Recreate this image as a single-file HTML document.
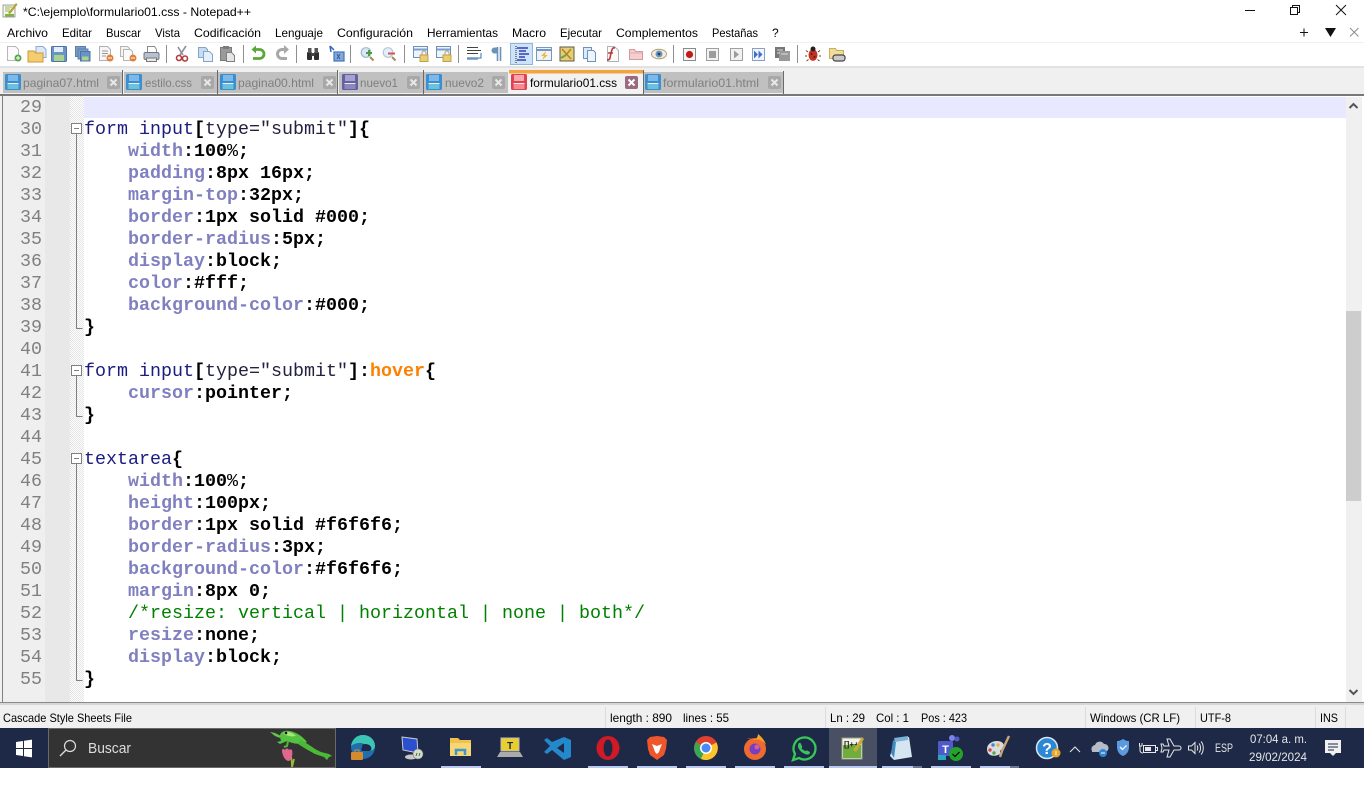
<!DOCTYPE html>
<html><head><meta charset="utf-8"><title>*C:\ejemplo\formulario01.css - Notepad++</title>
<style>
html,body{margin:0;padding:0;background:#fff;overflow:hidden;width:1364px;height:785px}
svg{display:block;position:absolute;left:0;top:0}
.u{font:12px "Liberation Sans",sans-serif;fill:#000}
.t{font:12px "Liberation Sans",sans-serif;fill:#7f7f7f}
.m{font:18.33px "Liberation Mono",monospace;white-space:pre}
.n{fill:#808080}
.s{fill:#1b1b80}
.a{fill:#222240}
.b{fill:#000;font-weight:bold}
.r{fill:#000;font-weight:normal}
.p{fill:#8080c0;font-weight:bold}
.o{fill:#ff8000;font-weight:bold}
.c{fill:#008000}
.w{font:12px "Liberation Sans",sans-serif;fill:#e6e6e6}
</style></head><body>
<svg width="1364" height="785" viewBox="0 0 1364 785" xmlns="http://www.w3.org/2000/svg">
<defs>
<pattern id="h" width="2" height="2" patternUnits="userSpaceOnUse"><rect width="2" height="2" fill="#fff"/><rect width="1" height="1" fill="#e4e4e4"/><rect x="1" y="1" width="1" height="1" fill="#e4e4e4"/></pattern>
<g id="fl"><rect x="0" y="0" width="16" height="16" rx="1.500" fill="#3b8ed0"/><rect x="3" y="1" width="10" height="6" fill="#7db8e8"/><rect x="2.500" y="9" width="11" height="6" fill="#6cc0d8"/><rect x="2.500" y="9" width="11" height="1" fill="#e5f2f8"/></g>
<g id="xb"><rect width="13" height="13" rx="2" fill="#a8a8a8"/><path d="M3.500 3.500l6 6M9.500 3.500l-6 6" stroke="#e8e8e8" stroke-width="2"/></g>
</defs>

<!-- chrome backgrounds -->
<rect width="1364" height="785" fill="#fff"/>
<rect y="42" width="1364" height="1" fill="#f0f0f0"/>
<rect y="66" width="1364" height="2" fill="#e2e2e2"/>
<rect y="68" width="1364" height="27" fill="#f0f0f0"/>

<!-- title bar -->
<g>
<rect x="3" y="5" width="12" height="12" fill="#f4f4e8" stroke="#8a8a8a" stroke-width=".8"/>
<path d="M5 7h7M5 9h5M5 11h6" stroke="#8fbf5f" stroke-width="1"/>
<path d="M8 13L16 3l1.500 1.500L10 14z" fill="#b6a12f"/>
<rect x="5" y="14" width="9" height="2.500" fill="#7fb347"/>
</g>
<text class="u" x="23" y="16" textLength="228" lengthAdjust="spacingAndGlyphs">*C:\ejemplo\formulario01.css - Notepad++</text>
<path d="M1245 10.500h10" stroke="#111" stroke-width="1"/>
<path d="M1290.500 7.500h7v7h-7zM1292.500 7.500v-2h7v7h-2" fill="none" stroke="#111" stroke-width="1"/>
<path d="M1336 5l10 10M1346 5l-10 10" stroke="#111" stroke-width="1"/>

<!-- menu -->
<g class="u">
<text class="u" x="7" y="37" textLength="41" lengthAdjust="spacingAndGlyphs">Archivo</text>
<text class="u" x="62" y="37" textLength="30" lengthAdjust="spacingAndGlyphs">Editar</text>
<text class="u" x="106" y="37" textLength="35" lengthAdjust="spacingAndGlyphs">Buscar</text>
<text class="u" x="155" y="37" textLength="25" lengthAdjust="spacingAndGlyphs">Vista</text>
<text class="u" x="194" y="37" textLength="67" lengthAdjust="spacingAndGlyphs">Codificación</text>
<text class="u" x="275" y="37" textLength="48" lengthAdjust="spacingAndGlyphs">Lenguaje</text>
<text class="u" x="337" y="37" textLength="76" lengthAdjust="spacingAndGlyphs">Configuración</text>
<text class="u" x="427" y="37" textLength="71" lengthAdjust="spacingAndGlyphs">Herramientas</text>
<text class="u" x="512" y="37" textLength="34" lengthAdjust="spacingAndGlyphs">Macro</text>
<text class="u" x="560" y="37" textLength="42" lengthAdjust="spacingAndGlyphs">Ejecutar</text>
<text class="u" x="616" y="37" textLength="82" lengthAdjust="spacingAndGlyphs">Complementos</text>
<text class="u" x="712" y="37" textLength="46" lengthAdjust="spacingAndGlyphs">Pestañas</text>
<text class="u" x="772" y="37">?</text>
</g>
<path d="M1300 32.500h8M1304 28.500v8" stroke="#111" stroke-width="1"/>
<path d="M1325 28h11l-5.500 9z" fill="#111"/>
<path d="M1350 28l8.500 8.500M1358.500 28l-8.500 8.500" stroke="#8c8c8c" stroke-width="1"/>

<!-- toolbar -->
<g fill="none">
<path d="M7.500 46.500h8l3 3v11h-11z" fill="#fbfbfb" stroke="#b8b8b8"/><circle cx="18" cy="58" r="3.500" fill="#55a54a"/><path d="M16 58h4M18 56v4" stroke="#fff"/>
<path d="M36 46.500h7l3 3v8h-10z" fill="#dde8f6" stroke="#8fa9cf"/><path d="M28 51h6l2 2h7v9H28z" fill="#f5cd6e" stroke="#c99a38"/>
<rect x="51.500" y="46.500" width="15" height="15" rx="1" fill="#6a93c6" stroke="#4a74aa"/><rect x="54" y="47" width="9" height="5" fill="#e4eef8"/><rect x="54" y="55" width="10" height="6" fill="#a9d28a"/>
<rect x="75.500" y="46.500" width="10" height="10" fill="#7a9cc6" stroke="#5c80ab"/><rect x="78" y="49" width="10" height="10" fill="#7a9cc6" stroke="#5c80ab"/><rect x="80.500" y="51.500" width="9.500" height="9.500" fill="#6a93c6" stroke="#4a74aa"/><rect x="82" y="56.500" width="6.500" height="4" fill="#a9d28a"/>
<path d="M99.500 46.500h8l3 3v11h-11z" fill="#f6f6f6" stroke="#b0b0b0"/><path d="M102 51h6M102 53.500h6M102 56h4" stroke="#999"/><circle cx="110" cy="58" r="3.500" fill="#e0803a"/><path d="M108 58h4" stroke="#fff"/>
<path d="M120.500 46.500h7l2 2v8h-9z" fill="#f3f3f3" stroke="#b5b5b5"/><path d="M123.500 49.500h7l2 2v9h-9z" fill="#fafafa" stroke="#b5b5b5"/><circle cx="133" cy="58" r="3.500" fill="#e0803a"/><path d="M131 58h4" stroke="#fff"/>
<path d="M147.500 46.500h7l2 3v4h-9z" fill="#fff" stroke="#8b8b8b"/><rect x="144" y="52.500" width="15" height="7" rx="1.500" fill="#b7c1cf" stroke="#6f7782"/><rect x="146.500" y="58" width="10" height="3.500" fill="#e9e9e9" stroke="#777"/>
<path d="M166.500 45v18" stroke="#8f8f8f"/>
<path d="M186 46l-6 9M178 47l5 8" stroke="#8e8e9c" stroke-width="1.600"/><circle cx="179" cy="58" r="2.500" stroke="#b33c3c" stroke-width="1.600"/><circle cx="185" cy="58.500" r="2.500" stroke="#b33c3c" stroke-width="1.600"/>
<path d="M198.500 47.500h7l2 2v8h-9z" fill="#c6dcf2" stroke="#84a4c8"/><path d="M203.500 51.500h6l3 3v7h-9z" fill="#e4eff9" stroke="#84a4c8"/>
<rect x="220.500" y="47.500" width="11" height="13" fill="#9a9a9a" stroke="#7a7a7a"/><path d="M226.500 52.500h5l3 3v6h-8z" fill="#e5e5e5" stroke="#7f7f7f"/><rect x="223" y="46" width="6" height="3" fill="#7c7c7c"/>
<path d="M243.500 45v18" stroke="#8f8f8f"/>
<path d="M254 49.500h5.500a4.500 4.500 0 0 1 0 9H253" stroke="#59a836" stroke-width="2.800"/><path d="M256 45.500v8l-4.500-4z" fill="#59a836"/>
<path d="M287 49.500h-5a4.500 4.500 0 0 0 0 9h5" stroke="#a8a8a8" stroke-width="3"/><path d="M284 45v9l5-4.500z" fill="#a8a8a8"/>
<path d="M296.500 45v18" stroke="#8f8f8f"/>
<rect x="307" y="52" width="5" height="8" rx="1" fill="#2f2f2f"/><rect x="314" y="52" width="5" height="8" rx="1" fill="#2f2f2f"/><rect x="308" y="48" width="3.500" height="5" fill="#555"/><rect x="314.500" y="48" width="3.500" height="5" fill="#555"/><rect x="311" y="53" width="4" height="3" fill="#444"/>
<path d="M330 46l1 6M330 46l4 4" stroke="#3566b0" stroke-width="1.500"/><rect x="334" y="52" width="10" height="9" fill="#86a9d6" stroke="#3f74ba" stroke-width="1.200"/><path d="M337 54l3 5M340 54l-3 5" stroke="#2f5ca0"/>
<path d="M350.500 45v18" stroke="#8f8f8f"/>
<circle cx="366" cy="52.500" r="4.800" fill="#d8e8f6" stroke="#9cb8d3" stroke-width="1.200"/><path d="M370 57l3.500 3.500" stroke="#a68a5a" stroke-width="2"/><path d="M366 53h6M369 50v6" stroke="#4aa03f" stroke-width="2"/>
<circle cx="388" cy="52.500" r="4.800" fill="#e3eef8" stroke="#b5c8da" stroke-width="1.200"/><path d="M392 57l3.500 3.500" stroke="#a68a5a" stroke-width="2"/><path d="M388 53.500h7" stroke="#d6554d" stroke-width="2"/>
<path d="M404.500 45v18" stroke="#8f8f8f"/>
<path d="M413.500 46.500h14v11h-14z" fill="#eef4fb" stroke="#6f90b9"/><path d="M414 49.500h13" stroke="#7aa0cf" stroke-width="2"/><rect x="420" y="55" width="8" height="6.500" fill="#e8cf77" stroke="#c4a23f"/><path d="M422 55v-2a2 2 0 0 1 4 0v2" stroke="#b7a26a"/>
<path d="M436.500 46.500h14v11h-14z" fill="#eef4fb" stroke="#6f90b9"/><path d="M437 49.500h13" stroke="#7aa0cf" stroke-width="2"/><rect x="443" y="55" width="8" height="6.500" fill="#e8cf77" stroke="#c4a23f"/><path d="M445 55v-2a2 2 0 0 1 4 0v2" stroke="#b7a26a"/>
<path d="M458.500 45v18" stroke="#8f8f8f"/>
<path d="M467 47.500h11M467 50.500h14M467 53.500h11" stroke="#444"/><path d="M467 58.500h11" stroke="#6f94c0" stroke-width="2.500"/><path d="M481 53v5h-3" stroke="#3670b5"/>
<path d="M497.500 47v14M500.500 47v14" stroke="#6b93b9" stroke-width="1.600"/><path d="M497 47.500h-2.500a3 3 0 0 0 0 6H497z" fill="#6b93b9"/>
<rect x="510.500" y="43.500" width="22" height="21" fill="#cde4f8" stroke="#8fb6d8"/>
<path d="M517 48h11M519 51h7M519 54h10M519 57h6M517 60h9" stroke="#1a1aa8" stroke-width="1.200"/><path d="M516 46v17" stroke="#222" stroke-dasharray="1 1"/>
<rect x="536.500" y="47.500" width="15" height="13" fill="#edf3f9" stroke="#7896b6"/><path d="M537 50h14" stroke="#6f96c7" stroke-width="2"/><path d="M546 51l-5 5h3l-2 4 6-5h-3z" fill="#eab83c"/>
<rect x="560" y="47" width="14" height="14" fill="#e6cf70" stroke="#5b5b4a"/><path d="M562 49l9 10M571 49l-5 6" stroke="#b5812f" stroke-width="1.500"/><path d="M561 58l5-3" stroke="#6aa356" stroke-width="2"/>
<path d="M583.500 47.500h8v11h-8z" fill="#dce9f6" stroke="#6d92bb"/><path d="M587.500 50.500h6l2 2v9h-8z" fill="#eef4fb" stroke="#6d92bb"/>
<path d="M607.500 46.500h7l4 4v11h-11z" fill="#fbfbfb" stroke="#b3b3b3"/><path d="M615 48c-3-1-3 2-4 5l-1 5c-.5 2-2 2-3 2M608 53h5" stroke="#bb3a3a" stroke-width="1.600"/>
<path d="M629.500 49.500h5l1 2h7v8h-13z" fill="#f3cfd0" stroke="#d49a9c"/><path d="M630 53h12" stroke="#e6a8aa"/>
<ellipse cx="659" cy="54" rx="7.500" ry="4.800" fill="#f1eee4" stroke="#b89f72"/><circle cx="659" cy="54" r="3.500" fill="#6c98bc"/><circle cx="659" cy="54" r="1.400" fill="#27435c"/>
<path d="M673.500 45v18" stroke="#8f8f8f"/>
<rect x="683.500" y="48.500" width="12" height="12" fill="#f6f6f6" stroke="#8a8a8a"/><circle cx="689.500" cy="54.500" r="3.600" fill="#c41a1a"/>
<rect x="706.500" y="48.500" width="12" height="12" fill="#f2f2f2" stroke="#a0a0a0"/><rect x="709" y="51" width="7" height="7" fill="#9c9c9c"/>
<rect x="730.500" y="48.500" width="12" height="12" fill="#f2f2f2" stroke="#a0a0a0"/><path d="M734 50.500l5 4-5 4z" fill="#9c9c9c"/>
<rect x="752.500" y="48.500" width="12" height="12" fill="#f2f5fb" stroke="#8aa0c0"/><path d="M754 50.500l4 4-4 4zM758.500 50.500l4 4-4 4z" fill="#3f6fc8"/>
<rect x="775" y="47" width="10" height="11" fill="#777"/><rect x="779" y="51" width="11" height="10" fill="#999"/><path d="M777 50h6M777 53h3M781 54h7" stroke="#ddd"/>
<path d="M797.500 45v18" stroke="#8f8f8f"/>
<ellipse cx="813" cy="55" rx="4.500" ry="5.800" fill="#c5301f"/><circle cx="813" cy="49" r="2.500" fill="#222"/><path d="M808 52l-2-1.500M818 52l2-1.500M807 56h-2M819 56h2M808.500 59.500l-2 1.500M817.500 59.500l2 1.500" stroke="#7a3b10"/><circle cx="811.500" cy="54" r=".9" fill="#222"/><circle cx="814.500" cy="57" r=".9" fill="#222"/>
<path d="M829.500 48.500h6l1 2h7v8h-14z" fill="#f2dd98" stroke="#c9ad5e"/><rect x="833" y="55" width="12" height="6" rx="2.500" fill="#c9c9c9" stroke="#444" stroke-width="1.200"/>
</g>

<!-- tabs -->
<rect x="3" y="72" width="119" height="21" fill="#c0c0c0"/><rect x="122" y="70" width="1" height="24" fill="#6a6a6a"/>
<rect x="124" y="72" width="93" height="21" fill="#c0c0c0"/><rect x="217" y="70" width="1" height="24" fill="#6a6a6a"/>
<rect x="218" y="72" width="119" height="21" fill="#c0c0c0"/><rect x="337" y="70" width="1" height="24" fill="#6a6a6a"/>
<rect x="339" y="72" width="84" height="21" fill="#c0c0c0"/><rect x="423" y="70" width="1" height="24" fill="#6a6a6a"/>
<rect x="424" y="72" width="84" height="21" fill="#c0c0c0"/>
<rect x="644" y="72" width="139" height="21" fill="#c0c0c0"/><rect x="643" y="70" width="1" height="24" fill="#6a6a6a"/><rect x="783" y="71" width="1" height="23" fill="#6a6a6a"/>
<rect x="509" y="70" width="134" height="25" fill="#f2f2f2"/><rect x="509" y="70" width="134" height="3.500" fill="#f5a33e"/>

<use href="#fl" x="5" y="74"/>
<use href="#fl" x="126" y="74"/>
<use href="#fl" x="220" y="74"/>
<g transform="translate(342 74)"><rect width="16" height="16" rx="1.500" fill="#65619e"/><rect x="3" y="1" width="10" height="6" fill="#a5a2d2"/><rect x="2.500" y="9" width="11" height="6" fill="#8b88bd"/><rect x="2.500" y="9" width="11" height="1" fill="#e8e8f2"/></g>
<use href="#fl" x="426" y="74"/>
<g transform="translate(511 74)"><rect width="16" height="16" rx="1.500" fill="#e0424f"/><rect x="3" y="1" width="10" height="6" fill="#f6a8ae"/><rect x="2.500" y="9" width="11" height="6" fill="#f28a92"/><rect x="2.500" y="9" width="11" height="1" fill="#fde8ea"/></g>
<use href="#fl" x="645" y="74"/>

<text class="t" x="23" y="87" textLength="76" lengthAdjust="spacingAndGlyphs">pagina07.html</text>
<text class="t" x="145" y="87" textLength="47" lengthAdjust="spacingAndGlyphs">estilo.css</text>
<text class="t" x="238" y="87" textLength="76" lengthAdjust="spacingAndGlyphs">pagina00.html</text>
<text class="t" x="360" y="87" textLength="38" lengthAdjust="spacingAndGlyphs">nuevo1</text>
<text class="t" x="445" y="87" textLength="39" lengthAdjust="spacingAndGlyphs">nuevo2</text>
<text class="u" x="530" y="87" textLength="87" lengthAdjust="spacingAndGlyphs">formulario01.css</text>
<text class="t" x="663" y="87" textLength="96" lengthAdjust="spacingAndGlyphs">formulario01.html</text>
<use href="#xb" x="107" y="76"/><use href="#xb" x="201" y="76"/><use href="#xb" x="323" y="76"/><use href="#xb" x="407" y="76"/><use href="#xb" x="492" y="76"/><use href="#xb" x="768" y="76"/>
<g transform="translate(625 76)"><rect width="13" height="13" rx="2" fill="#9a6a80"/><path d="M3.500 3.500l6 6M9.500 3.500l-6 6" stroke="#fff" stroke-width="2"/></g>

<!-- editor frame -->
<rect y="94" width="1364" height="2" fill="#787878"/>
<rect x="0" y="96" width="2" height="609" fill="#f0f0f0"/>
<rect x="2" y="96" width="1" height="607" fill="#808080"/>
<rect x="3" y="96" width="42" height="606" fill="#efefef"/>
<rect x="45" y="96" width="25" height="606" fill="#e8e8e8"/>
<rect x="70" y="96" width="14" height="606" fill="url(#h)"/>
<rect x="84" y="97" width="1262" height="21" fill="#e8e8ff"/>
<rect y="702" width="1364" height="1" fill="#8a8a8a"/>
<rect y="703" width="1364" height="2" fill="#d6d6d6"/>

<!-- scrollbar -->
<rect x="1346" y="97" width="16" height="605" fill="#f0f0f0"/>
<rect x="1346" y="311" width="15" height="190" fill="#cdcdcd"/>
<path d="M1349.500 108l4-4 4 4M1349.500 690l4 4 4-4" fill="none" stroke="#555" stroke-width="2"/>

<!-- fold -->
<g fill="none" stroke="#808080">
<rect x="71.500" y="123.500" width="10" height="10" fill="#fff"/><path d="M74 128.500h5"/><path d="M76.500 134v194.500h6"/>
<rect x="71.500" y="365.500" width="10" height="10" fill="#fff"/><path d="M74 370.500h5"/><path d="M76.500 376v40.500h6"/>
<rect x="71.500" y="453.500" width="10" height="10" fill="#fff"/><path d="M74 458.500h5"/><path d="M76.500 464v216.500h6"/>
</g>

<!-- line numbers -->
<g class="m n" transform="translate(0 1)">
<text x="20" y="111">29</text><text x="20" y="133">30</text><text x="20" y="155">31</text><text x="20" y="177">32</text><text x="20" y="199">33</text><text x="20" y="221">34</text><text x="20" y="243">35</text><text x="20" y="265">36</text><text x="20" y="287">37</text><text x="20" y="309">38</text><text x="20" y="331">39</text><text x="20" y="353">40</text><text x="20" y="375">41</text><text x="20" y="397">42</text><text x="20" y="419">43</text><text x="20" y="441">44</text><text x="20" y="463">45</text><text x="20" y="485">46</text><text x="20" y="507">47</text><text x="20" y="529">48</text><text x="20" y="551">49</text><text x="20" y="573">50</text><text x="20" y="595">51</text><text x="20" y="617">52</text><text x="20" y="639">53</text><text x="20" y="661">54</text><text x="20" y="683">55</text>
</g>

<!-- code -->
<g class="m" transform="translate(0 1)">
<text x="84" y="133"><tspan class="s">form input</tspan><tspan class="b">[</tspan><tspan class="a">type="submit"</tspan><tspan class="b">]{</tspan></text>
<text x="128" y="155"><tspan class="p">width</tspan><tspan class="b">:100</tspan><tspan class="r">%</tspan><tspan class="b">;</tspan></text>
<text x="128" y="177"><tspan class="p">padding</tspan><tspan class="b">:8px 16px;</tspan></text>
<text x="128" y="199"><tspan class="p">margin-top</tspan><tspan class="b">:32px;</tspan></text>
<text x="128" y="221"><tspan class="p">border</tspan><tspan class="b">:1px solid #000;</tspan></text>
<text x="128" y="243"><tspan class="p">border-radius</tspan><tspan class="b">:5px;</tspan></text>
<text x="128" y="265"><tspan class="p">display</tspan><tspan class="b">:block;</tspan></text>
<text x="128" y="287"><tspan class="p">color</tspan><tspan class="b">:#fff;</tspan></text>
<text x="128" y="309"><tspan class="p">background-color</tspan><tspan class="b">:#000;</tspan></text>
<text x="84" y="331"><tspan class="b">}</tspan></text>
<text x="84" y="375"><tspan class="s">form input</tspan><tspan class="b">[</tspan><tspan class="a">type="submit"</tspan><tspan class="b">]:</tspan><tspan class="o">hover</tspan><tspan class="b">{</tspan></text>
<text x="128" y="397"><tspan class="p">cursor</tspan><tspan class="b">:pointer;</tspan></text>
<text x="84" y="419"><tspan class="b">}</tspan></text>
<text x="84" y="463"><tspan class="s">textarea</tspan><tspan class="b">{</tspan></text>
<text x="128" y="485"><tspan class="p">width</tspan><tspan class="b">:100</tspan><tspan class="r">%</tspan><tspan class="b">;</tspan></text>
<text x="128" y="507"><tspan class="p">height</tspan><tspan class="b">:100px;</tspan></text>
<text x="128" y="529"><tspan class="p">border</tspan><tspan class="b">:1px solid #f6f6f6;</tspan></text>
<text x="128" y="551"><tspan class="p">border-radius</tspan><tspan class="b">:3px;</tspan></text>
<text x="128" y="573"><tspan class="p">background-color</tspan><tspan class="b">:#f6f6f6;</tspan></text>
<text x="128" y="595"><tspan class="p">margin</tspan><tspan class="b">:8px 0;</tspan></text>
<text x="128" y="617"><tspan class="c">/*resize: vertical | horizontal | none | both*/</tspan></text>
<text x="128" y="639"><tspan class="p">resize</tspan><tspan class="b">:none;</tspan></text>
<text x="128" y="661"><tspan class="p">display</tspan><tspan class="b">:block;</tspan></text>
<text x="84" y="683"><tspan class="b">}</tspan></text>
</g>

<!-- status bar -->
<rect y="705" width="1364" height="23" fill="#f0f0f0"/>
<g fill="#dcdcdc"><rect x="605" y="707" width="1" height="21"/><rect x="825" y="707" width="1" height="21"/><rect x="1085" y="707" width="1" height="21"/><rect x="1195" y="707" width="1" height="21"/><rect x="1315" y="707" width="1" height="21"/><rect x="1345" y="707" width="1" height="21"/></g>
<text class="u" x="3" y="722" textLength="129" lengthAdjust="spacingAndGlyphs">Cascade Style Sheets File</text>
<text class="u" x="610" y="722" textLength="62" lengthAdjust="spacingAndGlyphs">length : 890</text>
<text class="u" x="683" y="722" textLength="46" lengthAdjust="spacingAndGlyphs">lines : 55</text>
<text class="u" x="830" y="722" textLength="35" lengthAdjust="spacingAndGlyphs">Ln : 29</text>
<text class="u" x="876" y="722" textLength="33" lengthAdjust="spacingAndGlyphs">Col : 1</text>
<text class="u" x="921" y="722" textLength="46" lengthAdjust="spacingAndGlyphs">Pos : 423</text>
<text class="u" x="1090" y="722" textLength="90" lengthAdjust="spacingAndGlyphs">Windows (CR LF)</text>
<text class="u" x="1200" y="722" textLength="31" lengthAdjust="spacingAndGlyphs">UTF-8</text>
<text class="u" x="1320" y="722" textLength="18" lengthAdjust="spacingAndGlyphs">INS</text>

<!-- taskbar -->
<rect y="728" width="1364" height="40" fill="#1d2946"/>
<rect x="829" y="728" width="48" height="40" fill="#4a5064"/>
<g fill="#fff"><path d="M16 742l7-1v7h-7zM24 740.800l8-1.200v8.400h-8zM16 749h7v7l-7-1zM24 749h8v8.400l-8-1.200z"/></g>
<rect x="48.500" y="728.500" width="287" height="39" fill="#333" stroke="#6a6a6a"/>
<circle cx="70" cy="746" r="5.500" fill="none" stroke="#ddd" stroke-width="1.200"/><path d="M66 750l-6 6" stroke="#ddd" stroke-width="1.300"/>
<text x="88" y="753" style="font:15px 'Liberation Sans',sans-serif;fill:#ddd" textLength="43" lengthAdjust="spacingAndGlyphs">Buscar</text>
<!-- frog and tulip -->
<g>
<path d="M291 757c1 4 1 7 1 10M294 759l-2 8" stroke="#9ab93c" stroke-width="1.800" fill="none"/>
<path d="M282 750c1-2 2-1 3 0 1-2 3-2 4 0 1-1 2-1 3 0 1 4 0 9-3 11-4 0-7-6-7-11z" fill="#e2678f"/>
<path d="M270 732l5 1 6 3-1 2-5-2z" fill="#62c84a"/>
<path d="M280 737c-1-4 4-7 9-6 8 1 14 6 18 11-6 3-14 2-20-1-2 1-5 2-7 3l-3-2 4-1z" fill="#55c241"/>
<path d="M283 733c4-2 9-1 13 3-5 1-10 0-13-3z" fill="#a8e67c"/>
<path d="M300 740c5 2 11 6 15 9l6 3 8 2 3 2-3 1-2 3-3-3-9-3-9-5-8-5z" fill="#4cb838"/>
<path d="M288 741l-1 5-3 1" stroke="#4cb838" stroke-width="2" fill="none"/>
<circle cx="286" cy="733" r="1.300" fill="#111"/>
</g>

<!-- underlines -->
<g fill="#b8c8f0">
<rect x="441" y="766" width="40" height="2"/><rect x="588" y="766" width="40" height="2"/><rect x="637" y="766" width="40" height="2"/><rect x="686" y="766" width="40" height="2"/><rect x="735" y="766" width="40" height="2"/><rect x="784" y="766" width="40" height="2"/><rect x="829" y="766" width="48" height="2"/><rect x="882" y="766" width="31" height="2"/><rect x="931" y="766" width="40" height="2"/><rect x="980" y="766" width="30" height="2"/>
</g>
<rect x="913" y="766" width="9" height="2" fill="#6f7690"/><rect x="1010" y="766" width="9" height="2" fill="#6f7690"/>

<!-- taskbar icons -->
<!-- edge -->
<circle cx="363" cy="747" r="12" fill="#1f6fb0"/>
<path d="M351 746c1-7 6-11 12-11 7 0 12 5 12 11 0 3-3 5-6 5h-7c-2-2 4-3 3-6-2-3-9-3-14 1z" fill="#3cc4b4"/>
<path d="M362 745c2-2 8-1 9 2 1 2 0 4-2 4h-7c-2-2 1-4 0-6z" fill="#1d2946"/>
<rect x="351" y="752" width="12" height="8" rx="1" fill="#d48a2e"/><path d="M355 752v-2h4v2" stroke="#d48a2e" fill="none"/>
<!-- rdp -->
<path d="M402 737l15 2 1 14-15-3z" fill="#2a4fd0" stroke="#ccc"/><ellipse cx="411" cy="757" rx="6" ry="2.500" fill="#c8c8c8"/><circle cx="418" cy="754" r="5" fill="#d8dccf" stroke="#777" stroke-width=".6"/><path d="M416 756l1-3M419 756l1-3" stroke="#2e7d32"/>
<!-- folder -->
<path d="M450 738h8l2 2h11v15h-21z" fill="#f0c14c"/><rect x="450" y="743" width="21" height="13" fill="#f7d774"/><path d="M456 755v-5h9v5" fill="none" stroke="#3f97cf" stroke-width="2.500"/>
<!-- T -->
<rect x="501" y="738" width="18" height="13" fill="#e8cf2f" stroke="#bbb"/><path d="M497 757l3-5h20l3 5z" fill="#aaa"/><text x="510" y="749" text-anchor="middle" style="font:bold 10px 'Liberation Sans',sans-serif;fill:#1d2946">T</text>
<!-- vscode -->
<path d="M564 737l7 3v17l-7 3-12-10-5 4-3-2 6-6-6-6 3-2 5 4zM564 743l-7 5 7 5z" fill="#2489ca"/>
<!-- opera -->
<ellipse cx="608" cy="748" rx="11.500" ry="12" fill="#d01a25"/><ellipse cx="608" cy="748" rx="4.500" ry="8.500" fill="#1d2946"/>
<!-- brave -->
<path d="M650 737l7-1 7 1 3 3-1 9-2 6-7 5-7-5-2-6-1-9z" fill="#f0562c"/><path d="M652 744l5 2 5-2-2 5-1 3-2 2-2-2-1-3z" fill="#fff"/>
<!-- chrome -->
<circle cx="706" cy="748" r="12" fill="#e0412f"/><path d="M706 748l-10.400 6A12 12 0 0 1 696 742z" fill="#3aa757"/><path d="M696 754.500l10-6.500 10.400-5.500A12 12 0 0 1 701 759z" fill="#f9c52b"/><path d="M706 748L701 759a12 12 0 0 1-5.500-5z" fill="#3aa757"/><circle cx="706" cy="748" r="6" fill="#fff"/><circle cx="706" cy="748" r="4.500" fill="#4a8af4"/>
<!-- firefox -->
<circle cx="755" cy="749" r="11" fill="#ef6a2e"/><path d="M747 739c3-1 6 0 8 1 2-2 3-4 3-6 4 3 7 7 8 11-2-3-4-4-6-5-3-1-9-1-13-1z" fill="#f7a32b"/><circle cx="755" cy="749" r="5.500" fill="#7a3dbf"/><circle cx="757" cy="747" r="2.500" fill="#d05fa0"/>
<!-- whatsapp -->
<path d="M793 760l2-6a11 11 0 1 1 4 4z" fill="none" stroke="#37c658" stroke-width="2.300"/><path d="M799 743c2-1 2 2 3 3s-1 2 0 3l3 2c1 0 2-1 3 0l2 1c0 3-3 3-5 2-3-1-6-4-7-7 0-2 0-3 1-4z" fill="#37c658"/>
<!-- npp -->
<rect x="842" y="738" width="20" height="21" fill="#f2f2e8" stroke="#9aa07a"/><rect x="843" y="745" width="18" height="13" fill="#6fae3c"/><text x="844" y="747" style="font:bold 8px 'Liberation Sans',sans-serif;fill:#222">[]++</text><path d="M853 750l9-13 2 2-8 13z" fill="#c7a93a"/>
<!-- notes -->
<path d="M895 739l14-2 3 20-18 3-4-4z" fill="#d6e6f0"/><path d="M893 740l-2 13 3 5 2-16z" fill="#3f8ac0"/><path d="M894 738l14-2v4l-13 2z" fill="#7ab2d8"/>
<!-- teams -->
<rect x="938" y="741" width="15" height="15" rx="1.500" fill="#5059c9"/><text x="945.500" y="753" text-anchor="middle" style="font:bold 11px 'Liberation Sans',sans-serif;fill:#fff">T</text><circle cx="952" cy="738" r="3" fill="#7b83eb"/><circle cx="957" cy="739" r="2.500" fill="#5059c9"/><rect x="938" y="755" width="8" height="5" fill="#2aa7c0"/><circle cx="956" cy="754" r="7" fill="#22a32a"/><path d="M952.500 754l2.500 2.500 4.500-4.500" fill="none" stroke="#111" stroke-width="1.300"/>
<!-- paint -->
<path d="M987 749c0-5 5-8 10-8 4 0 7 2 7 5 0 3-3 3-4 5 0 2 1 3-2 4-6 2-11 0-11-6z" fill="#d9dde2"/><circle cx="993" cy="745" r="1.700" fill="#3a8ad0"/><circle cx="990" cy="750" r="1.700" fill="#d04a3a"/><circle cx="998" cy="745" r="1.700" fill="#e3b43a"/><circle cx="994" cy="753" r="1.700" fill="#58a84a"/><path d="M1009 736l-7 15-2 6" stroke="#c8a878" stroke-width="2.400" fill="none"/>
<!-- help -->
<circle cx="1047" cy="748" r="10.500" fill="#2c87d4" stroke="#d9e8f5" stroke-width="1.500"/><text x="1047" y="754" text-anchor="middle" style="font:bold 16px 'Liberation Sans',sans-serif;fill:#fff">?</text><circle cx="1056" cy="753" r="4.500" fill="#eaa72a"/><rect x="1055.500" y="751" width="1" height="4" fill="#fff"/>
<!-- tray -->
<path d="M1070 752l5-5 5 5" fill="none" stroke="#e6e6e6"/>
<path d="M1092 751a4 4 0 0 1 3-6 5 5 0 0 1 9-1 4 4 0 0 1 1 8h-13z" fill="#b5bcc8"/><circle cx="1103" cy="753" r="4" fill="#2f87d6"/><path d="M1101 753h4" stroke="#fff"/>
<path d="M1117 741c3 0 4-1 6-2 2 1 3 2 6 2v6c0 5-3 8-6 9-3-1-6-4-6-9z" fill="#5a9ae0"/><path d="M1120 747l2.500 2.500 4-4" fill="none" stroke="#fff" stroke-width="1.300"/>
<g fill="none" stroke="#e6e6e6"><rect x="1143.500" y="745.500" width="12" height="7"/><path d="M1155.500 747.500h2v3h-2"/><path d="M1140 746v4c0 2 1 3 3 3M1139 746h3M1139.500 743v3M1142 743v3"/></g><rect x="1145" y="747" width="6" height="4" fill="#e6e6e6"/>
<path d="M1164 746h5l-2-7h3l4 7h5c2 0 2 2 2 2s0 2-2 2h-5l-4 7h-3l2-7h-5l-1 2h-2l1-4-1-4h2z" fill="none" stroke="#e6e6e6"/>
<g fill="none" stroke="#e6e6e6"><path d="M1188.500 746h3l3.500-3.500v11L1191.500 750h-3z"/><path d="M1197 745.500c1 1 1 4 0 5M1199 743.500c2 2 2 7 0 9M1201 741.500c3 3 3 10 0 13"/></g>
<text class="w" x="1215" y="752" textLength="18" lengthAdjust="spacingAndGlyphs">ESP</text>
<text class="w" x="1250" y="743" textLength="57" lengthAdjust="spacingAndGlyphs">07:04 a. m.</text>
<text class="w" x="1249" y="761" textLength="58" lengthAdjust="spacingAndGlyphs">29/02/2024</text>
<path d="M1325 740h16v13h-5l-3 3-3-3h-5z" fill="#f0f0f0"/><path d="M1328 744h10M1328 747h10M1328 750h6" stroke="#1d2946"/>
</svg>
</body></html>
